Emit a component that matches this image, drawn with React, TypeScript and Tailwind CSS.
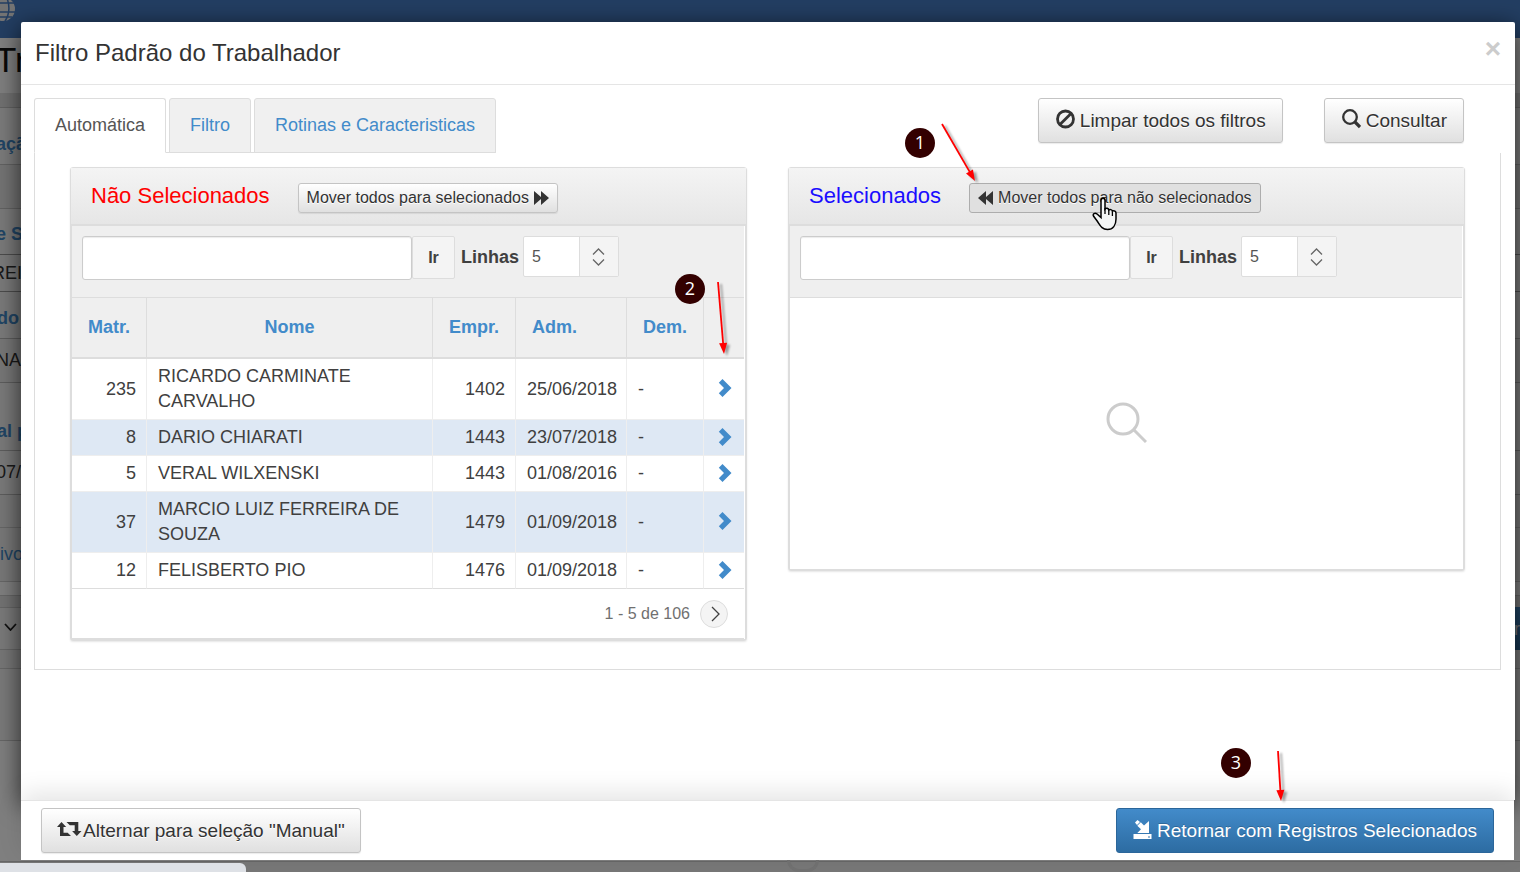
import React, { useState } from 'react';

interface Worker {
  id: number;
  name: string;
  company: number;
  admission: string;
  dismissal: string;
}

const workers: Worker[] = [
  { id: 235, name: 'RICARDO CARMINATE CARVALHO', company: 1402, admission: '25/06/2018', dismissal: '-' },
  { id: 8, name: 'DARIO CHIARATI', company: 1443, admission: '23/07/2018', dismissal: '-' },
  { id: 5, name: 'VERAL WILXENSKI', company: 1443, admission: '01/08/2016', dismissal: '-' },
  { id: 37, name: 'MARCIO LUIZ FERREIRA DE SOUZA', company: 1479, admission: '01/09/2018', dismissal: '-' },
  { id: 12, name: 'FELISBERTO PIO', company: 1476, admission: '01/09/2018', dismissal: '-' },
];

const buttonBase =
  'rounded-[3px] border border-[#c4c4c4] bg-linear-to-b from-white to-[#e0e0e0] text-[#333] shadow-[0_1px_1px_rgba(0,0,0,0.08)] [text-shadow:0_1px_0_#fff] whitespace-nowrap';

const ForwardIcon = () => (
  <svg width="15" height="14" viewBox="0 0 15 14" fill="currentColor" aria-hidden="true">
    <path d="M0 0 7 6V0l8 7-8 7V8l-7 6z" />
  </svg>
);

const BackwardIcon = () => (
  <svg width="15" height="14" viewBox="0 0 15 14" fill="currentColor" aria-hidden="true">
    <path d="M15 0 8 6V0L0 7l8 7V8l7 6z" />
  </svg>
);

const BanIcon = () => (
  <svg className="mb-1" width="20" height="20" viewBox="0 0 20 20" fill="none" stroke="currentColor" strokeWidth="2.800" aria-hidden="true">
    <circle cx="10.500" cy="10" r="8" />
    <path d="M5.200 15.300 15.800 4.700" />
  </svg>
);

const SearchIcon = () => (
  <svg className="mb-1" width="20" height="20" viewBox="0 0 20 20" fill="none" stroke="currentColor" aria-hidden="true">
    <circle cx="9" cy="8" r="6.800" strokeWidth="2.300" />
    <path d="m14 13 5 5" strokeWidth="3.200" />
  </svg>
);

const RetweetIcon = () => (
  <svg className="mb-1" width="26" height="16" viewBox="0 0 26 16" fill="currentColor" aria-hidden="true">
    <path d="M4.500 1 0 6H3v9H14l-3.300-3.300H6.500V6h2.700z" />
    <path d="M9.500 1h11.800v9H24.500l-4.700 5L15.100 10h2.600V4.300H12.800z" />
  </svg>
);

const SaveIcon = () => (
  <svg className="mb-1" width="19" height="19" viewBox="0 0 19 19" fill="currentColor" aria-hidden="true">
    <path d="M2 2.500 4.500 0l2.500 2-3 3z" />
    <path d="M4.300 5.800 7.800 2.300l3.200 3.200L16 1v12H4.300L8 9.200z" />
    <path fillRule="evenodd" d="M.5 14h18v5H.5zm14.500 2.500v1h2v-1z" />
  </svg>
);

const ChevronIcon = () => (
  <svg width="14" height="18" viewBox="0 0 14 18" fill="currentColor" aria-hidden="true">
    <path d="M4.500 0 13.500 9l-9 9L.8 14.300 6 9 .8 3.700z" />
  </svg>
);

const HandCursor = () => (
  <svg className="pointer-events-none absolute left-[123px] top-[14px] z-10" width="26" height="34" viewBox="0 0 26 34" aria-hidden="true">
    <path
      d="M9 3.500C9 .5 13 .5 13 3.500V12c1-1.300 3.500-.8 3.800 1 1-.900 3.200-.5 3.600 1.200 1.800-1 3.600.2 3.600 2V22c0 6-3 10.500-8.500 10.500S8.500 29 5.500 24.500L1.500 19c-1-2 1.300-3.600 3.300-2.200L9 20.500z"
      fill="#f4f6f6"
      stroke="#000"
      strokeWidth="1.500"
    />
    <path d="M13 11v6M16.800 13v5M20.400 14.500V19" stroke="#000" strokeWidth="1.300" />
  </svg>
);

interface PanelProps {
  title: string;
  titleClass: string;
  action: React.ReactNode;
  name: string;
  children: React.ReactNode;
}

const Panel: React.FC<PanelProps> = ({ title, titleClass, action, name, children }) => {
  const [rows, setRows] = useState('5');

  return (
    <section className="rounded-[3px] border border-[#ddd] bg-white shadow-[0_1px_2px_rgba(0,0,0,0.1)]">
      <header className="flex h-14 items-center bg-linear-to-b from-[#f4f4f4] to-[#e6e6e6] pl-5">
        <h2 className={titleClass}>{title}</h2>
        <div className="relative mt-1 ml-7 flex">{action}</div>
      </header>
      <div className="border border-t-2 border-[#ddd] pr-px">
        <form className="flex h-[71px] items-start bg-[#efefef] pl-2.5 pt-2.5" onSubmit={(e) => e.preventDefault()}>
          <input
            type="text"
            aria-label="Pesquisar"
            className="h-11 w-[330px] rounded-[3px] border border-[#ccc] bg-white px-3 shadow-[inset_0_1px_1px_rgba(0,0,0,0.08)] outline-none"
          />
          <button type="submit" className="h-[43px] w-[43px] rounded-[2px] border border-[#ddd] bg-[#f4f4f4] text-base font-bold text-[#404040]">
            Ir
          </button>
          <label htmlFor={name} className="ml-1.5 w-[62px] text-lg leading-[42px] font-bold text-[#404040]">
            Linhas
          </label>
          <div className="relative h-[41px] w-24">
            <select
              id={name}
              value={rows}
              onChange={(e) => setRows(e.target.value)}
              className="h-full w-full appearance-none rounded-[2px] border border-[#ddd] bg-white pl-2 text-base text-[#555] outline-none"
            >
              <option>5</option>
              <option>10</option>
              <option>20</option>
            </select>
            <span className="pointer-events-none absolute inset-y-px right-px flex w-[39px] items-center justify-center border-l border-[#ddd] bg-[#f4f4f4] pr-0.5 text-[#666]">
              <svg width="13" height="18" viewBox="0 0 13 18" fill="none" stroke="currentColor" strokeWidth="1.300" aria-hidden="true">
                <path d="m1 6.500 5.500-5.500L12 6.500M1 11.500 6.500 17l5.500-5.500" />
              </svg>
            </span>
          </div>
        </form>
        {children}
      </div>
    </section>
  );
};

const WorkerTable = () => (
  <>
    <table className="w-full table-fixed border-separate border-spacing-0 text-lg leading-[25px] text-[#404040]">
      <colgroup>
        <col className="w-[75px]" />
        <col />
        <col className="w-[83px]" />
        <col className="w-[111px]" />
        <col className="w-[77px]" />
        <col className="w-10" />
      </colgroup>
      <thead>
        <tr className="h-[62px] bg-[#efefef] [&>th]:border-t [&>th]:border-r [&>th]:border-b-2 [&>th]:border-[#ddd] [&>th:last-child]:border-r-0">
          <th><a href="#matr" className="text-[#428bca]">Matr.</a></th>
          <th><a href="#nome" className="text-[#428bca]">Nome</a></th>
          <th><a href="#empr" className="text-[#428bca]">Empr.</a></th>
          <th className="pl-4 text-left"><a href="#adm" className="text-[#428bca]">Adm.</a></th>
          <th><a href="#dem" className="text-[#428bca]">Dem.</a></th>
          <th aria-label="Mover"></th>
        </tr>
      </thead>
      <tbody>
        {workers.map((w) => (
          <tr key={w.id} className="even:bg-[#dee8f4] [&>td]:border-r [&>td]:border-b [&>td]:border-[#eee] [&>td]:py-[5px] [&>td:last-child]:border-r-0 last:[&>td]:border-b-[#ddd]">
            <td className="pr-2.5 text-right">{w.id}</td>
            <td className="pr-6 pl-[11px]">{w.name}</td>
            <td className="pr-2.5 text-right">{w.company}</td>
            <td className="pl-[11px]">{w.admission}</td>
            <td className="pl-[11px]">{w.dismissal}</td>
            <td>
              <a href={`#mover-${w.id}`} aria-label={`Mover ${w.name}`} className="flex justify-center pb-0.5 pl-0.5 text-[#428bca]">
                <ChevronIcon />
              </a>
            </td>
          </tr>
        ))}
      </tbody>
    </table>
    <div className="flex h-[50px] items-center justify-end gap-2.5 border-b border-[#ddd] pr-4 text-base text-[#707070]">
      <span>1 - 5 de 106</span>
      <button type="button" aria-label="Próxima página" className="flex size-7 items-center justify-center rounded-full border border-[#ddd] bg-[#f4f4f4] pl-0.5 text-[#404040]">
        <svg width="9" height="16" viewBox="0 0 9 16" fill="none" stroke="currentColor" strokeWidth="1.300" aria-hidden="true">
          <path d="m1 1 7 7-7 7" />
        </svg>
      </button>
    </div>
  </>
);

// page left behind the dialog
const PageBehind = () => (
  <div className="flex h-screen flex-col overflow-hidden bg-white text-lg whitespace-nowrap text-[#333] [&>div]:shrink-0">
    <div className="h-[38px] bg-[#477cc4]">
      <svg width="16" height="22" viewBox="0 0 16 22" fill="none" aria-hidden="true">
        <circle cx="3" cy="9" r="12" fill="#e8e8e8" />
        <path d="M-9 3h24M-9 12h24M6-4c4 8 4 18-1 25M-2 17h14" stroke="#477cc4" strokeWidth="1.500" />
      </svg>
    </div>
    <div className="-ml-[5px] h-[55px] text-[35px] leading-[44px] text-[#111]">Tr</div>
    <div className="h-3.5 bg-[#e2e2e2]"></div>
    <div className="-ml-1 h-[58px] border-t border-b border-[#c4c4c4] bg-[#f6f6f6] pt-[22px] font-bold text-[#428bca]">ação</div>
    <div className="h-11 border-b border-[#c4c4c4] bg-[#e8e8e8]"></div>
    <div className="-ml-1 h-[46px] border-b border-[#999] bg-[#f4f4f4] pt-[11px] font-bold text-[#428bca]">e S</div>
    <div className="-ml-2 h-[37px] border-b border-[#999] bg-[#f4f4f4] pt-1">REI</div>
    <div className="-ml-1 h-[47px] border-b border-[#bbb] bg-[#f4f4f4] pt-3 pl-px font-bold text-[#428bca]">do</div>
    <div className="-ml-1 h-11 border-b border-[#bbb] bg-[#eee] pt-[7px]">NA</div>
    <div className="-ml-1 h-[68px] border-b border-[#bbb] bg-[#f4f4f4] pt-[34px] pl-px font-bold text-[#428bca]">al p</div>
    <div className="-ml-1 h-11 border-b border-[#bbb] bg-[#f4f4f4] pt-[7px]">07/</div>
    <div className="h-[33px] border-b border-[#ccc] bg-[#eee]"></div>
    <div className="h-[54px] border-b border-[#ccc] bg-[#f0f0f0] pt-3 text-[#428bca]">ivo</div>
    <div className="h-3.5 border-b border-[#ccc]"></div>
    <div className="h-3 border-b border-[#ccc] bg-[#e6e6e6]"></div>
    <div className="flex h-[42px] items-center justify-between border-b border-[#ccc] bg-[#f4f4f4]">
      <svg className="mb-1 ml-1" width="13" height="8" viewBox="0 0 13 8" fill="none" stroke="#222" strokeWidth="1.800" aria-hidden="true">
        <path d="m1 1 5.500 6L12 1" />
      </svg>
      <span className="h-11 w-1.5 bg-linear-to-b from-[#428bca] to-[#2d6ca2] pt-2 text-[#eee]">r</span>
    </div>
    <div className="h-[19px] border-b border-[#ccc] bg-[#eee]"></div>
    <div className="h-[72px] border-b border-[#ccc] bg-[#f4f4f4]"></div>
    <div className="h-[121px] border-b border-[#ccc]"></div>
    <div className="h-6 bg-[#eee]"></div>
  </div>
);

interface CalloutProps {
  step: number;
  badge: string;
  arrow: string;
  dx: number;
  dy: number;
}

const Callout: React.FC<CalloutProps> = ({ step, badge, arrow, dx, dy }) => {
  const angle = (Math.atan2(dy, dx) * 180) / Math.PI;
  const length = Math.hypot(dx, dy);

  return (
    <>
      <span className={`pointer-events-none absolute flex size-[30px] items-center justify-center rounded-full bg-[#300] pb-0.5 text-lg text-white [font-family:'Open_Sans',sans-serif] ${badge}`}>
        {step}
      </span>
      <svg className={`pointer-events-none absolute overflow-visible drop-shadow-[3px_2px_1px_rgba(0,0,0,0.35)] ${arrow}`} width="1" height="1" aria-hidden="true">
        <g transform={`rotate(${angle})`} fill="red" stroke="red">
          <path d={`M0 0H${length - 8}`} strokeWidth="1.800" />
          <path d={`M${length} 0l-11-4v8z`} stroke="none" />
        </g>
      </svg>
    </>
  );
};

const tabs = ['Automática', 'Filtro', 'Rotinas e Caracteristicas'];

export default function App() {
  const [activeTab, setActiveTab] = useState('Automática');

  return (
    <main className="relative h-screen overflow-hidden [font-family:'Liberation_Sans',Arial,sans-serif]">
      <PageBehind />
      <div className="absolute inset-0 flex flex-col bg-black/50 pt-[22px] pr-[5px] pb-3 pl-[21px]">
        <span className="absolute bottom-0 left-[787px] h-3 w-8 rounded-b-full border-3 border-t-0 border-[#717171]"></span>
        <div role="dialog" aria-labelledby="dialog-title" className="flex min-h-0 flex-1 flex-col">
          <div className="flex min-h-0 flex-1 flex-col overflow-hidden rounded-t-[2px] bg-white shadow-[0_5px_25px_rgba(0,0,0,0.7)]">
            <header className="flex h-[63px] shrink-0 items-center justify-between border-b border-[#e5e5e5] px-3.5">
              <h1 id="dialog-title" className="text-2xl text-[#333]">Filtro Padrão do Trabalhador</h1>
              <button type="button" aria-label="Fechar" className="mb-2 text-[28px] font-bold text-[#ccc]">×</button>
            </header>

            <div className="px-[13px] pt-[13px]">
              <div className="flex items-start justify-between">
                <div role="tablist" className="flex h-[55px] gap-[3px] border-b border-[#ddd]">
                  {tabs.map((tab) => (
                    <button
                      key={tab}
                      type="button"
                      role="tab"
                      aria-selected={activeTab === tab}
                      onClick={() => setActiveTab(tab)}
                      className="h-[55px] rounded-t-[3px] border border-[#ddd] bg-[#f0f0f0] px-5 pb-0.5 text-lg text-[#428bca] aria-selected:border-b-white aria-selected:bg-white aria-selected:text-[#555]"
                    >
                      {tab}
                    </button>
                  ))}
                </div>
                <div className="mr-[38px] flex gap-[41px]">
                  <button type="button" className={`flex h-[45px] items-center gap-[5px] px-4 pt-px text-[19px] ${buttonBase}`}>
                    <BanIcon />
                    Limpar todos os filtros
                  </button>
                  <button type="button" className={`flex h-[45px] items-center gap-[5px] px-4 pt-px text-[19px] ${buttonBase}`}>
                    <SearchIcon />
                    Consultar
                  </button>
                </div>
              </div>

              <div className="mr-px grid grid-cols-2 items-start gap-[41px] border border-t-0 border-[#ddd] px-[35px] pt-3.5 pb-7">
                <Panel
                  name="linhas-origem"
                  title="Não Selecionados"
                  titleClass="pb-0.5 text-[22px] text-[red]"
                  action={
                    <button type="button" className={`flex h-[30px] items-center gap-[5px] px-2 text-base ${buttonBase}`}>
                      Mover todos para selecionados
                      <ForwardIcon />
                    </button>
                  }
                >
                  <WorkerTable />
                </Panel>
                <Panel
                  name="linhas-destino"
                  title="Selecionados"
                  titleClass="pb-0.5 text-[22px] text-[#1a0dff]"
                  action={
                    <>
                      <button
                        type="button"
                        className="flex h-[30px] items-center gap-[5px] rounded-[3px] border border-[#adadad] bg-[#e0e0e0] px-2 text-base whitespace-nowrap text-[#333] [text-shadow:0_1px_0_#fff]"
                      >
                        <BackwardIcon />
                        Mover todos para não selecionados
                      </button>
                      <HandCursor />
                    </>
                  }
                >
                  <div className="flex h-[272px] items-center justify-center border-t border-[#ddd] pb-[22px] text-[#ccc]">
                    <svg width="42" height="42" viewBox="0 0 42 42" fill="none" stroke="currentColor" strokeWidth="3" aria-hidden="true">
                      <circle cx="18" cy="17" r="15" />
                      <path d="m29 28 12 12" />
                    </svg>
                  </div>
                </Panel>
              </div>
            </div>
          </div>

          <footer className="relative mr-px flex h-[60px] items-center justify-between border-t border-[#e5e5e5] bg-white px-5 shadow-[0_-8px_24px_rgba(0,0,0,0.1)]">
            <button type="button" className={`flex h-[45px] items-center px-[15px] pt-px text-[19px] ${buttonBase}`}>
              <RetweetIcon />
              Alternar para seleção "Manual"
            </button>
            <button
              type="button"
              className="flex h-[45px] items-center gap-[5px] rounded-[3px] border border-[#2b669a] bg-linear-to-b from-[#428bca] to-[#2d6ca2] px-4 pt-px text-[19px] text-white [text-shadow:0_-1px_0_rgba(0,0,0,0.2)]"
            >
              <SaveIcon />
              Retornar com Registros Selecionados
            </button>
          </footer>
        </div>
      </div>

      <Callout step={1} badge="left-[905px] top-[128px]" arrow="left-[942px] top-[124px]" dx={33} dy={57} />
      <Callout step={2} badge="left-[675px] top-[274px]" arrow="left-[718px] top-[282px]" dx={6} dy={72} />
      <Callout step={3} badge="left-[1221px] top-[748px]" arrow="left-[1278px] top-[751px]" dx={3} dy={50} />

      <div className="absolute bottom-0 left-0 h-[9px] w-[246px] rounded-tr-md bg-[#dee1e6]"></div>
    </main>
  );
}
